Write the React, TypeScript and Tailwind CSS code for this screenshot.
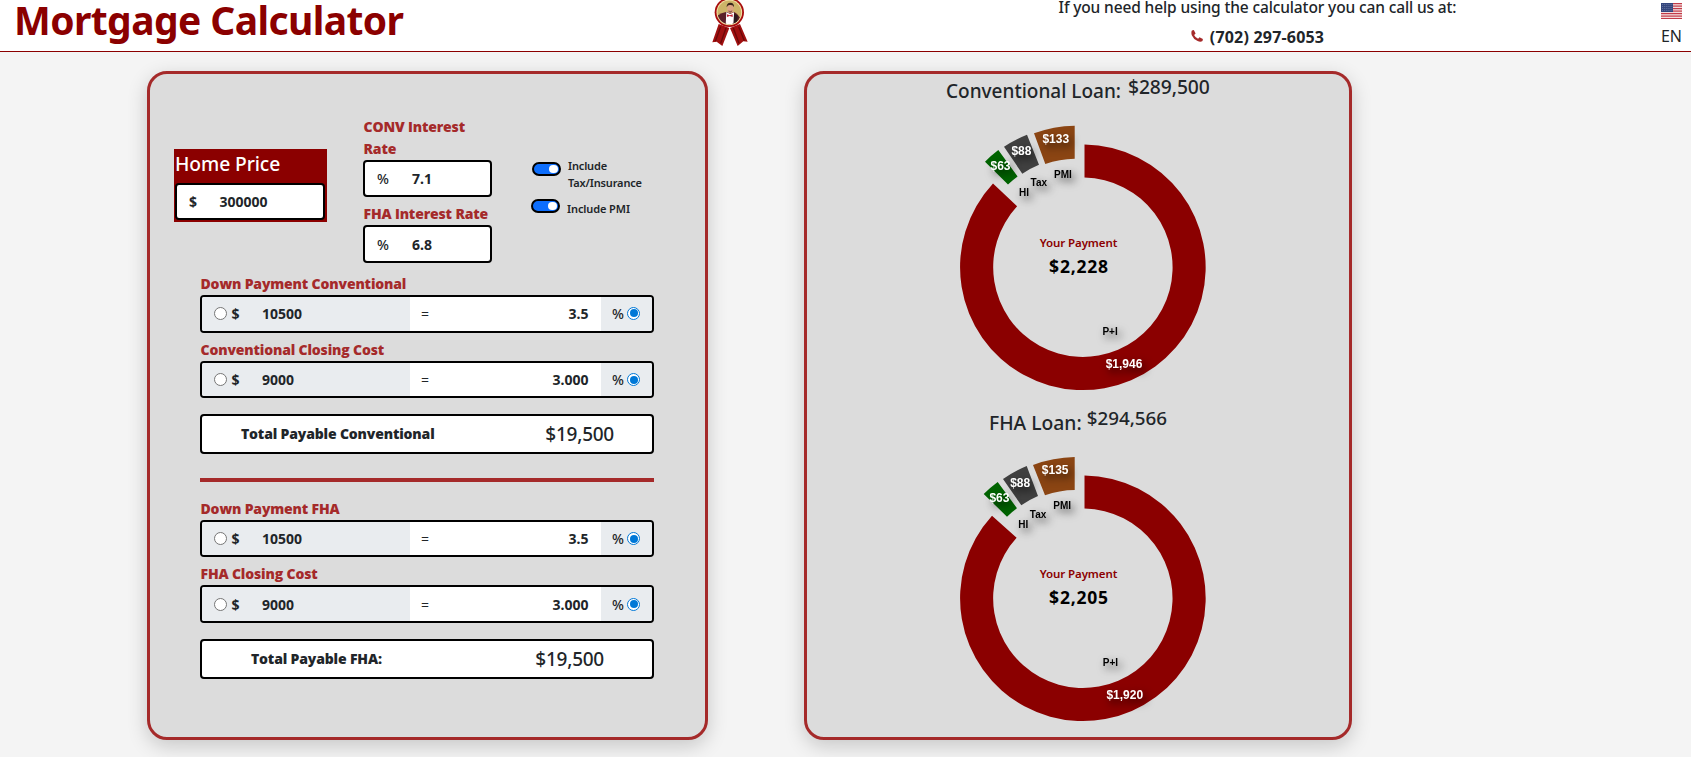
import type { ReactNode } from "react";

type Point = [number, number];

interface Slice {
  fill: string;
  // outer start, outer end, inner end, inner start
  corners: [Point, Point, Point, Point];
  large?: boolean;
}

interface Label {
  text: string;
  x: number;
  y: number;
  kind: "value" | "name";
}

interface Chart {
  viewBox: string;
  top: number;
  payment: string;
  slices: Slice[];
  labels: Label[];
}

const conventionalChart: Chart = {
  viewBox: "930 118 300 280",
  top: 0,
  payment: "$2,228",
  slices: [
    { fill: "#8b0000", large: true, corners: [[1084.5, 144.5], [993, 183.6], [1017.1, 206.3], [1084.5, 177.6]] },
    { fill: "#006400", corners: [[985, 161.7], [998.3, 150], [1017.6, 176.5], [1008, 184.5]] },
    { fill: "#404040", corners: [[1004, 146.7], [1027, 134.7], [1039, 164.7], [1022.3, 173.7]] },
    { fill: "#8b4513", corners: [[1034, 133.3], [1074.7, 125.7], [1074.7, 158.7], [1045.3, 164]] },
  ],
  labels: [
    { text: "$1,946", x: 1105.7, y: 368, kind: "value" },
    { text: "$63", x: 990.5, y: 169.5, kind: "value" },
    { text: "$88", x: 1011.4, y: 154.7, kind: "value" },
    { text: "$133", x: 1042.4, y: 143, kind: "value" },
    { text: "P+I", x: 1102.4, y: 335, kind: "name" },
    { text: "HI", x: 1019, y: 196, kind: "name" },
    { text: "Tax", x: 1030.6, y: 186, kind: "name" },
    { text: "PMI", x: 1054, y: 178.3, kind: "name" },
  ],
};

const fhaChart: Chart = {
  viewBox: "930 449 300 280",
  top: 331,
  payment: "$2,205",
  slices: [
    { fill: "#8b0000", large: true, corners: [[1084.5, 475.5], [992, 515.7], [1016.6, 537.8], [1084.5, 508.6]] },
    { fill: "#006400", corners: [[983.7, 494], [997.7, 482], [1017, 508.3], [1007, 516.7]] },
    { fill: "#404040", corners: [[1003, 479], [1026.7, 466], [1038, 496], [1021.3, 505.3]] },
    { fill: "#8b4513", corners: [[1033, 465], [1074.7, 457], [1074.7, 490], [1045, 495.3]] },
  ],
  labels: [
    { text: "$1,920", x: 1106.4, y: 699, kind: "value" },
    { text: "$63", x: 989.4, y: 501.7, kind: "value" },
    { text: "$88", x: 1010.2, y: 486.7, kind: "value" },
    { text: "$135", x: 1041.8, y: 474, kind: "value" },
    { text: "P+I", x: 1102.8, y: 666, kind: "name" },
    { text: "HI", x: 1018.2, y: 528, kind: "name" },
    { text: "Tax", x: 1029.8, y: 518.3, kind: "name" },
    { text: "PMI", x: 1053.3, y: 509, kind: "name" },
  ],
};

const OUTER = 122.8;
const INNER = 89.7;

function slicePath({ corners: [a, b, c, d], large }: Slice) {
  const flag = large ? 1 : 0;
  return `M${a} A${OUTER} ${OUTER} 0 ${flag} 1 ${b} L${c} A${INNER} ${INNER} 0 ${flag} 0 ${d} Z`;
}

function Donut({ chart }: { chart: Chart }) {
  return (
    <svg width="300" height="280" viewBox={chart.viewBox} className="ml-[123px] block shrink-0 overflow-visible">
      {chart.slices.map((s) => (
        <path key={s.fill} d={slicePath(s)} fill={s.fill} />
      ))}
      {chart.labels.map((l) => (
        <text
          key={l.text}
          x={l.x}
          y={l.y}
          className={
            l.kind === "value"
              ? "fill-white font-['Liberation_Sans',sans-serif] text-[12px] font-bold [filter:drop-shadow(3px_4px_4px_rgba(0,0,0,0.7))]"
              : "fill-black font-['Liberation_Sans',sans-serif] text-[10px] font-bold [filter:drop-shadow(3px_4px_4px_rgba(0,0,0,0.7))]"
          }
        >
          {l.text}
        </text>
      ))}
      <text x="1078.5" y={247 + chart.top} textAnchor="middle" className="fill-[#8b0000] text-[11.5px] font-semibold tracking-[-0.1px]">
        Your Payment
      </text>
      <text x="1079" y={272.7 + chart.top} textAnchor="middle" className="fill-black text-[17.5px] font-bold tracking-[0.8px]">
        {chart.payment}
      </text>
    </svg>
  );
}

function Ribbon() {
  return (
    <svg width="36" height="47" viewBox="66 0 108 141" className="shrink-0">
      <path d="M86 72 67 127 80 125 97 138 118 84Z" fill="#a01010" />
      <path d="M92 80 76 124M108 84 92 130" stroke="#6d0808" strokeWidth="4" fill="none" />
      <path d="M150 72 173 125 160 124 143 138 120 84Z" fill="#a01010" />
      <path d="M146 80 163 122M130 84 147 130" stroke="#6d0808" strokeWidth="4" fill="none" />
      <circle cx="118" cy="37" r="44" fill="#a80d0d" />
      <circle cx="118" cy="37" r="38.5" fill="#f3e2a8" />
      <circle cx="118" cy="37" r="35.5" fill="#cdb468" />
      <clipPath id="medal">
        <circle cx="118" cy="37" r="35.5" />
      </clipPath>
      <g clipPath="url(#medal)">
        <path d="M84 80V46Q94 38 108 36L134 37Q144 42 149 52V80Z" fill="#5a1f28" />
        <path d="M109 36 120 42 132 37 132 76H107Z" fill="#fff" />
        <path d="M132 42 143 46 140 78 130 76Z" fill="#2b1a1e" />
        <ellipse cx="121" cy="26" rx="10" ry="14" fill="#dca582" />
        <path d="M110 22Q109 8 121 8 133 8 132 22 129 14 121 15 113 14 110 22Z" fill="#3b261c" />
        <path d="M115 31Q121 35 127 31L126 36Q121 40 116 36Z" fill="#946050" />
        <path d="M111 43 119 46 128 43V51L119 48 111 51Z" fill="#c01f32" />
      </g>
    </svg>
  );
}

function Flag() {
  return (
    <svg width="21" height="16" viewBox="0 0 21 16">
      <rect width="21" height="16" fill="#f3dcdc" />
      {[0, 2.5, 5, 7.5, 10, 12.5, 15].map((y) => (
        <rect key={y} y={y} width="21" height="1.2" fill="#c23b48" />
      ))}
      <rect width="12" height="9" fill="#33457c" />
      {[1.5, 3.5, 5.5, 7.5].map((y) => (
        <path key={y} d={`M1 ${y}H11.5`} stroke="#8793b8" strokeWidth="0.7" strokeDasharray="0.8 1.1" />
      ))}
    </svg>
  );
}

function Header() {
  return (
    <header className="flex h-[52px] border-b border-[#8b0000] bg-white">
      <h1 className="w-[712px] shrink-0 pl-[14px] text-[39px] leading-[40px] font-bold tracking-[-0.6px] text-[#8b0000]">
        Mortgage Calculator
      </h1>
      <Ribbon />
      <div className="ml-[292px] flex w-[435px] flex-col items-center">
        <p className="-mt-[5px] text-[15.5px] leading-6 font-medium tracking-[-0.13px] whitespace-nowrap">
          If you need help using the calculator you can call us at:
        </p>
        <div className="mt-[6px] flex gap-[7px]">
          <svg width="12" height="12" viewBox="0 0 12 12" className="mt-[5px]">
            <path
              d="M.9.5 2.8.1 4.6 3.4 3.1 4.9Q4.300 7.500 7.100 8.800L8.500 7.300 11.900 8.900 11.500 11.100Q9.500 12.300 6.600 11.100 2.400 9.200.8 5.200-.1 2.500.9.5Z"
              fill="#a52a2a"
            />
          </svg>
          <span className="text-[16px] leading-6 font-bold tracking-[0.2px]">(702) 297-6053</span>
        </div>
      </div>
      <div className="ml-auto flex w-[39px] flex-col items-center pt-[3px]">
        <Flag />
        <span className="mt-[5px] text-[16px] leading-6">EN</span>
      </div>
    </header>
  );
}

function FieldLabel({ children }: { children: ReactNode }) {
  return (
    <div className="pl-[0.5px] font-['Open_Sans',sans-serif] text-[14px] leading-[22px] font-extrabold tracking-[-0.16px] text-[#a52a2a]">
      {children}
    </div>
  );
}

function PrefixedInput({ prefix, value, bold, tall }: { prefix: string; value: string; bold?: boolean; tall?: boolean }) {
  return (
    <div
      className={`flex items-center rounded-[4px] border-2 border-black bg-white pl-3 text-[14px] ${tall ? "h-[38px]" : "h-[37px]"}`}
    >
      <span className={bold ? "w-[30.5px] font-bold" : "w-[35px] font-medium"}>{prefix}</span>
      <span className="font-bold">{value}</span>
    </div>
  );
}

function Toggle() {
  return (
    <span className="flex h-[14px] w-[29px] shrink-0 items-center justify-end rounded-full border-2 border-black bg-[#0d6efd] pr-[1.5px]">
      <span className="size-[8.5px] rounded-full bg-white" />
    </span>
  );
}

function Radio({ checked }: { checked?: boolean }) {
  return checked ? (
    <span className="flex size-[13px] items-center justify-center rounded-full border border-[#0078d7] bg-white">
      <span className="size-[8px] rounded-full bg-[#0078d7]" />
    </span>
  ) : (
    <span className="size-[13px] rounded-full border border-[#767676] bg-white" />
  );
}

function AmountRow({
  amount,
  percent,
  tall,
  raised,
}: {
  amount: string;
  percent: string;
  tall?: boolean;
  raised?: boolean;
}) {
  return (
    <div
      className={`flex overflow-hidden rounded-[4px] border-2 border-black bg-white text-[14px] font-bold ${tall ? "h-[38px]" : "h-[37px]"}`}
    >
      <div className={`flex w-[208px] items-center bg-[#e9ecef] pl-3 ${raised ? "pb-[2px]" : ""}`}>
        <Radio />
        <span className="ml-[4.5px] w-[30.5px]">$</span>
        <span>{amount}</span>
      </div>
      <div className={`flex w-[191px] items-center justify-between pr-[12.5px] pl-[11px] ${raised ? "pb-[2px]" : ""}`}>
        <span className="font-normal">=</span>
        <span>{percent}</span>
      </div>
      <div className={`flex flex-1 items-center bg-[#e9ecef] pl-[11px] ${raised ? "pb-[2px]" : ""}`}>
        <span className="w-[15px] font-medium tracking-[-0.5px]">%</span>
        <Radio checked />
      </div>
    </div>
  );
}

function TotalRow({ label, amount, className }: { label: string; amount: string; className: string }) {
  return (
    <div
      className={`mt-4 flex h-10 items-center justify-between rounded-[4px] border-2 border-black bg-white ${className}`}
    >
      <span className="-mt-[2px] font-['Open_Sans',sans-serif] text-[14px] font-extrabold tracking-[-0.16px]">
        {label}
      </span>
      <span className="mt-px text-[19px] font-medium tracking-[-0.25px]">{amount}</span>
    </div>
  );
}

function FormCard() {
  return (
    <section className="h-[669px] w-[561px] rounded-[20px] border-[3px] border-[#a52a2a] bg-[#dcdcdc] shadow-[0_6px_20px_rgba(0,0,0,0.19)]">
      <div className="flex h-[199px] items-start pl-6">
        <div className="mt-[75px] h-[73px] w-[153px] bg-[#8b0000] pr-[2px] pl-px">
          <div className="mb-[5px] pt-px text-[19.3px] leading-7 font-medium tracking-[-0.1px] text-white">Home Price</div>
          <PrefixedInput prefix="$" value="300000" bold />
        </div>
        <div className="mt-[42px] ml-9 w-[129px]">
          <FieldLabel>CONV Interest Rate</FieldLabel>
          <PrefixedInput prefix="%" value="7.1" />
          <div className="mt-[6px] whitespace-nowrap">
            <FieldLabel>FHA Interest Rate</FieldLabel>
          </div>
          <PrefixedInput prefix="%" value="6.8" tall />
        </div>
        <div className="mt-[83px] ml-10 text-[11px] leading-[17px] font-semibold">
          <div className="flex items-start">
            <span className="mt-[5px]">
              <Toggle />
            </span>
            <span className="ml-[7px] tracking-[-0.15px]">
              Include
              <br />
              Tax/Insurance
            </span>
          </div>
          <div className="mt-[7px] -ml-px flex items-start">
            <span className="mt-px">
              <Toggle />
            </span>
            <span className="mt-[2px] ml-[7px] tracking-[-0.1px]">Include PMI</span>
          </div>
        </div>
      </div>
      <div className="ml-[50px] w-[454px]">
        <FieldLabel>Down Payment Conventional</FieldLabel>
        <AmountRow amount="10500" percent="3.5" tall raised />
        <div className="h-[6px]" />
        <FieldLabel>Conventional Closing Cost</FieldLabel>
        <AmountRow amount="9000" percent="3.000" />
        <TotalRow label="Total Payable Conventional" amount="$19,500" className="pr-[38px] pl-[39px]" />
        <hr className="mt-6 mb-4 h-1 border-0 bg-[#a52a2a]" />
        <FieldLabel>Down Payment FHA</FieldLabel>
        <AmountRow amount="10500" percent="3.5" />
        <div className="h-[6px]" />
        <FieldLabel>FHA Closing Cost</FieldLabel>
        <AmountRow amount="9000" percent="3.000" tall />
        <TotalRow label="Total Payable FHA:" amount="$19,500" className="pr-[48px] pl-[49px]" />
      </div>
    </section>
  );
}

function ResultCard() {
  return (
    <section className="flex h-[669px] w-[548px] flex-col rounded-[20px] border-[3px] border-[#a52a2a] bg-[#dcdcdc] shadow-[0_6px_20px_rgba(0,0,0,0.19)]">
      <div className="flex h-11 shrink-0 gap-[7px] pl-[139px] leading-6 font-medium">
        <span className="mt-[5px] text-[19px]">Conventional Loan:</span>
        <span className="mt-px text-[19.3px] tracking-[-0.1px]">$289,500</span>
      </div>
      <Donut chart={conventionalChart} />
      <div className="flex h-[51px] shrink-0 gap-[5px] pt-2 pl-[182px] leading-6 font-medium">
        <span className="mt-[5px] text-[19.3px]">FHA Loan:</span>
        <span className="text-[18.8px]">$294,566</span>
      </div>
      <Donut chart={fhaChart} />
    </section>
  );
}

export default function App() {
  return (
    <div className="h-[774px] w-full overflow-hidden bg-white font-['Noto_Sans',sans-serif] text-[#212529]">
      <div className="w-[1691px]">
        <Header />
        <main className="flex h-[705px] gap-24 overflow-hidden bg-[#f4f4f4] pt-[19px] pl-[147px]">
          <FormCard />
          <ResultCard />
        </main>
      </div>
    </div>
  );
}
